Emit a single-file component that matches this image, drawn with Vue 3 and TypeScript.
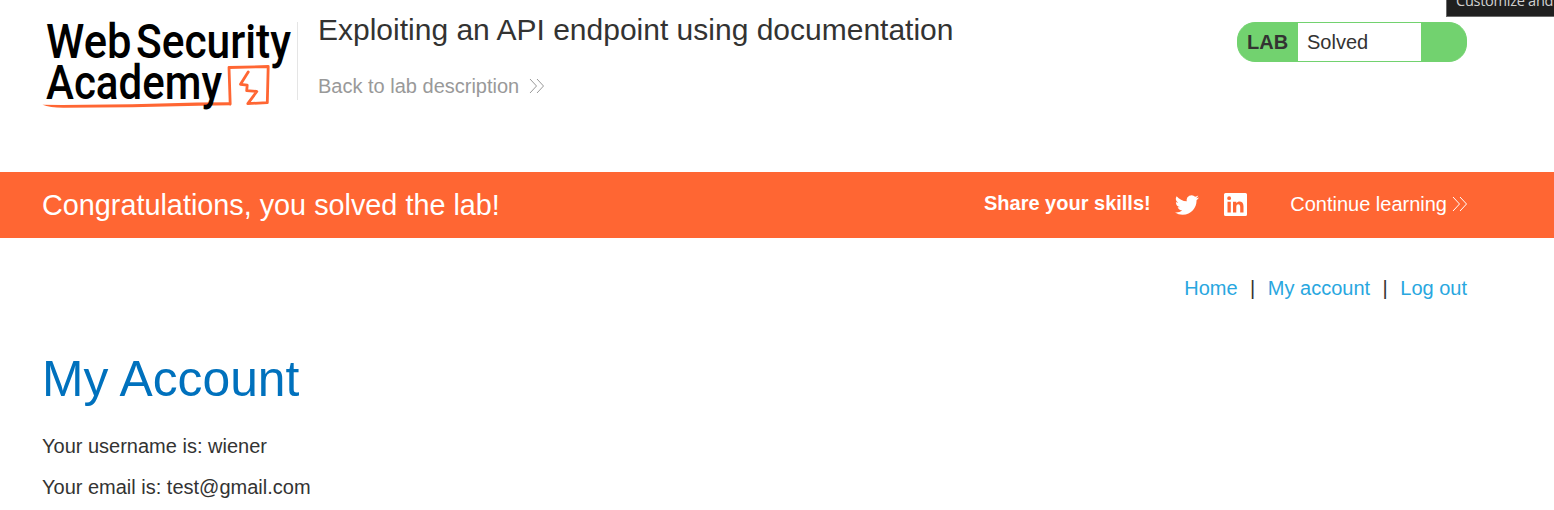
<script setup lang="ts">
interface NavLink {
  label: string
}
const links: NavLink[] = [{ label: 'Home' }, { label: 'My account' }, { label: 'Log out' }]
const details: string[] = ['Your username is: wiener', 'Your email is: test@gmail.com']
</script>

<template>
  <div class="page">
    <div class="tooltip">Customize and control</div>
    <header class="header">
      <svg class="logo" width="256" height="100" viewBox="0 0 256 100" role="img" aria-label="Web Security Academy">
        <path class="underline" d="M0.500 94.800 Q8 97.800 22 97.700 L90 97.300 L157 95.800 L189 95.300 V92.200 L155 92.600 L90 94.200 L20 94.900 Z" />
        <path class="frame" d="M188.200 94 L187 57.500 L226.200 56.500 L225.300 92.600 L205.800 93.600 L214.800 81.500 L204.700 80.600 L205.200 75.200 L198.500 74.300 L206.200 62" />
        <g class="logo-text">
          <text x="4" y="48" textLength="85.500" lengthAdjust="spacingAndGlyphs">Web</text>
          <text x="94" y="48" textLength="155" lengthAdjust="spacingAndGlyphs">Security</text>
          <text x="4" y="89" textLength="176" lengthAdjust="spacingAndGlyphs">Academy</text>
        </g>
      </svg>
      <div class="title">
        <h2>Exploiting an API endpoint using documentation</h2>
        <a class="back">
          <span>Back to lab description</span>
          <svg class="chevrons" width="16" height="16" viewBox="0 0 16 16"><path d="M1 1 L7.5 8 L1 15 M8 1 L14.5 8 L8 15" /></svg>
        </a>
      </div>
      <div class="status">
        <span class="lab">LAB</span>
        <span class="state">Solved</span>
      </div>
    </header>

    <section class="banner">
      <h4>Congratulations, you solved the lab!</h4>
      <div class="share">
        <strong>Share your skills!</strong>
        <svg class="twitter" width="24" height="24" viewBox="0 0 24 24"><path d="M23.95 4.57a10 10 0 0 1-2.82.77 4.96 4.96 0 0 0 2.16-2.72c-.95.55-2 .96-3.13 1.18a4.92 4.92 0 0 0-8.38 4.48C7.69 8.1 4.07 6.13 1.64 3.16a4.93 4.93 0 0 0 1.52 6.57 4.9 4.9 0 0 1-2.23-.61v.06a4.92 4.92 0 0 0 3.95 4.83 5 5 0 0 1-2.21.08 4.94 4.94 0 0 0 4.6 3.42A9.87 9.87 0 0 1 0 19.54a13.94 13.94 0 0 0 7.55 2.21c9.05 0 14-7.5 14-13.98 0-.21 0-.42-.02-.63a9.94 9.94 0 0 0 2.46-2.55z" /></svg>
        <svg class="linkedin" width="23" height="23" viewBox="0 0 23 23"><path fill-rule="evenodd" d="M1.5 0h20Q23 0 23 1.500v20q0 1.500-1.500 1.500h-20Q0 23 0 21.500v-20Q0 0 1.500 0zM3.500 8.700v10.800h3.300V8.700zM5.150 3.200a1.950 1.950 0 1 0 0 3.900 1.950 1.950 0 0 0 0-3.900zM9 8.700v10.800h3.300v-5.800c0-3.300 3.900-3.300 3.900 0v5.800h3.300v-6.300c0-5.400-5.200-5.700-7.200-3V8.700z" /></svg>
      </div>
      <a class="continue">
        <span>Continue learning</span>
        <svg class="chevrons" width="16" height="16" viewBox="0 0 16 16"><path d="M1 1 L7.5 8 L1 15 M8 1 L14.5 8 L8 15" /></svg>
      </a>
    </section>

    <nav class="nav">
      <template v-for="(link, index) in links" :key="link.label">
        <span v-if="index > 0" class="separator">|</span>
        <a>{{ link.label }}</a>
      </template>
    </nav>

    <main class="account">
      <h1>My Account</h1>
      <p v-for="line in details" :key="line">{{ line }}</p>
    </main>
  </div>
</template>

<style>
body {
  margin: 0;
  background: #fff;
}
</style>

<style scoped>
.page {
  position: relative;
  width: 1554px;
  height: 510px;
  overflow: hidden;
  font: 20px/24px "Liberation Sans", Arial, sans-serif;
  color: #333332;
}
h1,
h2,
h4,
p {
  margin: 0;
  font-weight: 400;
}
.tooltip {
  position: absolute;
  top: -17px;
  left: 1446px;
  box-sizing: border-box;
  width: 200px;
  height: 34px;
  padding-left: 9px;
  border: 1px solid #6b6b6b;
  background: #1f1f1f;
  color: #d0d0d0;
  font: 14.6px/32px "Open Sans", sans-serif;
  letter-spacing: -0.3px;
  white-space: nowrap;
}
.header {
  display: flex;
  align-items: flex-start;
  box-sizing: border-box;
  height: 172px;
  padding: 10px 87px 0 42px;
}
.logo {
  flex: none;
}
.logo-text {
  font: 500 48px Roboto, sans-serif;
  fill: #000;
}
.underline {
  fill: #ff6633;
}
.frame {
  fill: none;
  stroke: #ff6633;
  stroke-width: 2.8;
  stroke-linejoin: round;
  stroke-linecap: round;
}
.title {
  height: 78px;
  margin-top: 12px;
  margin-left: -1px;
  padding-left: 20px;
  border-left: 1px solid #e5e5e5;
}
.title h2 {
  margin-top: -10px;
  font-size: 30px;
  line-height: 36px;
  white-space: nowrap;
}
.back,
.continue {
  display: flex;
  align-items: center;
}
.back {
  gap: 10px;
  margin-top: 26px;
  color: #999;
}
.chevrons {
  fill: none;
  stroke: currentColor;
  stroke-width: 1;
}
.status {
  display: flex;
  box-sizing: border-box;
  width: 230px;
  height: 40px;
  margin-top: 12px;
  margin-left: auto;
  border: 1px solid #72d26f;
  border-radius: 18px;
  background: #72d26f;
  line-height: 38px;
  overflow: hidden;
}
.lab {
  width: 60px;
  padding-left: 9px;
  box-sizing: border-box;
  font-weight: 700;
}
.state {
  width: 123px;
  padding-left: 9px;
  box-sizing: border-box;
  background: #fff;
}
.banner {
  display: flex;
  align-items: center;
  box-sizing: border-box;
  height: 66px;
  padding: 0 86px 2px 42px;
  background: #ff6633;
  color: #fff;
}
.banner h4 {
  padding-top: 2px;
  font-size: 28.8px;
}
.share svg {
  fill: currentColor;
}
.share {
  display: flex;
  align-items: center;
  margin-left: auto;
}
.share strong {
  padding-bottom: 2px;
}
.twitter {
  margin-top: 1px;
  margin-left: 24px;
}
.linkedin {
  margin-top: 1px;
  margin-left: 25px;
}
.continue {
  gap: 5px;
  margin-left: 43.5px;
}
.nav {
  display: flex;
  justify-content: flex-end;
  padding: 38px 87px 0 0;
}
.nav a {
  color: #29a7df;
}
.separator {
  margin: 0 12.5px;
}
.account {
  padding: 49px 42px 0;
}
.account h1 {
  margin-bottom: 25px;
  color: #0071bd;
  font-size: 49.8px;
  line-height: 60px;
}
.account p {
  margin-bottom: 17px;
}
</style>
